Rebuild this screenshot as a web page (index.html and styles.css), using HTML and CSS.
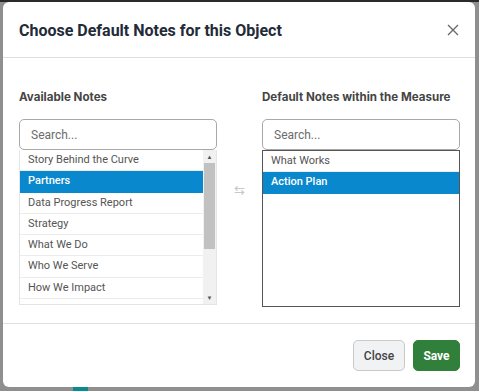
FILE: index.html
```html
<!DOCTYPE html>
<html lang="en">

<head>
    <meta charset="UTF-8">
    <meta name="viewport" content="width=device-width, initial-scale=1.0">
    <title>Choose Default Notes</title>
    <link rel="stylesheet" href="styles.css">
</head>

<body>
    <div class="backdrop">
        <div class="modal">
            <div class="modal-header">
                <h1>Choose Default Notes for this Object</h1>
                <button class="btn-x" aria-label="Close">
                    <svg width="12" height="12" viewBox="0 0 12 12">
                        <path d="M1 1 L11 11 M11 1 L1 11" stroke="#666" stroke-width="1.3" fill="none" />
                    </svg>
                </button>
            </div>

            <div class="modal-body">
                <div class="col">
                    <h3>Available Notes</h3>
                    <input type="text" class="search" placeholder="Search...">
                    <div class="list list-left">
                        <ul>
                            <li>Story Behind the Curve</li>
                            <li class="selected">Partners</li>
                            <li>Data Progress Report</li>
                            <li>Strategy</li>
                            <li>What We Do</li>
                            <li>Who We Serve</li>
                            <li>How We Impact</li>
                            <li>Why Is This Important?</li>
                        </ul>
                        <div class="scrollbar">
                            <span class="arrow">&#9650;</span>
                            <div class="track"><div class="thumb"></div></div>
                            <span class="arrow">&#9660;</span>
                        </div>
                    </div>
                </div>

                <div class="swap">&#8646;</div>

                <div class="col">
                    <h3>Default Notes within the Measure</h3>
                    <input type="text" class="search" placeholder="Search...">
                    <div class="list list-right">
                        <ul>
                            <li>What Works</li>
                            <li class="selected">Action Plan</li>
                        </ul>
                    </div>
                </div>
            </div>

            <div class="modal-footer">
                <button class="btn btn-close">Close</button>
                <button class="btn btn-save">Save</button>
            </div>
        </div>
        <div class="page-bit"></div>
    </div>
</body>

</html>
```

FILE: styles.css
```css
* {
    margin: 0;
    padding: 0;
    box-sizing: border-box;
}

html,
body {
    height: 100%;
}

body {
    font-family: Roboto, "Liberation Sans", sans-serif;
    background: #8f8f8f;
    border-top: 2px solid #2a2a2a;
    overflow: hidden;
}

.backdrop {
    padding: 0 4px 0 3px;
}

/* Modal */
.modal {
    width: 472px;
    height: 385px;
    background: #ffffff;
    border-radius: 6px;
    display: flex;
    flex-direction: column;
}

.modal-header {
    height: 56px;
    display: flex;
    align-items: center;
    justify-content: space-between;
    padding: 0 16px;
    border-bottom: 1px solid #dcdfe3;
}

.modal-header h1 {
    font-family: Roboto, sans-serif;
    font-size: 16px;
    font-weight: 700;
    color: #232b38;
    margin-top: 1px;
}

.btn-x {
    background: none;
    border: none;
    width: 12px;
    height: 12px;
    display: flex;
}

.modal-body {
    flex: 1;
    display: grid;
    grid-template-columns: 198px 45px 198px;
    padding: 31px 15px 0 16px;
    border-bottom: 1px solid #dcdfe3;
}

.col h3 {
    font-family: Inter, Roboto, sans-serif;
    font-size: 11.6px;
    font-weight: 700;
    color: #454545;
    line-height: 16px;
    margin-bottom: 14px;
}

.search {
    width: 198px;
    height: 31px;
    border: 1px solid #a8a8a8;
    border-radius: 5px;
    padding: 0 11px;
    font-family: Roboto, sans-serif;
    font-size: 12px;
    color: #333;
    display: block;
}

.search::placeholder {
    color: #6c6c6c;
}

/* Lists */
.list {
    display: flex;
    font-size: 11px;
    color: #555;
}

.list ul {
    list-style: none;
    flex: 1;
}

.list li {
    height: 21.3px;
    line-height: 20px;
    padding: 0 8px;
    border-bottom: 1px solid #ececec;
    white-space: nowrap;
    overflow: hidden;
}

.list li.selected {
    background: #0a88cd;
    color: #ffffff;
    font-weight: 500;
    border-bottom-color: #0a88cd;
}

.list-left {
    height: 155px;
    overflow: hidden;
    border: 1px solid #e4e4e4;
    border-top: none;
}

.list-right {
    height: 157px;
    border: 1px solid #555;
}

.list-right li {
    border-bottom: none;
}

.list-right li:first-child {
    border-bottom: 1px solid #ececec;
}

.scrollbar {
    width: 13px;
    background: #f1f1f1;
    display: flex;
    flex-direction: column;
    align-items: center;
}

.scrollbar .arrow {
    font-size: 6px;
    color: #555;
    height: 13px;
    line-height: 13px;
}

.scrollbar .track {
    flex: 1;
    width: 100%;
}

.scrollbar .thumb {
    height: 86px;
    background: #c1c1c1;
    margin: 0 1px;
}

.swap {
    align-self: start;
    margin-top: 94px;
    text-align: center;
    color: #c8c8c8;
    font-size: 13px;
}

/* Footer */
.modal-footer {
    height: 63px;
    display: flex;
    align-items: center;
    justify-content: flex-end;
    gap: 8px;
    padding: 0 15px 0 0;
}

.btn {
    height: 31px;
    border-radius: 5px;
    font-family: Roboto, sans-serif;
    font-size: 12px;
    font-weight: 500;
    cursor: pointer;
}

.btn-close {
    width: 52px;
    background: #f1f2f4;
    border: 1px solid #c9c9c9;
    color: #444;
}

.btn-save {
    width: 47px;
    background: #30803b;
    border: 1px solid #30803b;
    color: #ffffff;
    font-weight: 700;
}

.page-bit {
    width: 15px;
    height: 6px;
    margin-left: 70px;
    background: #0f8a8c;
}
```
